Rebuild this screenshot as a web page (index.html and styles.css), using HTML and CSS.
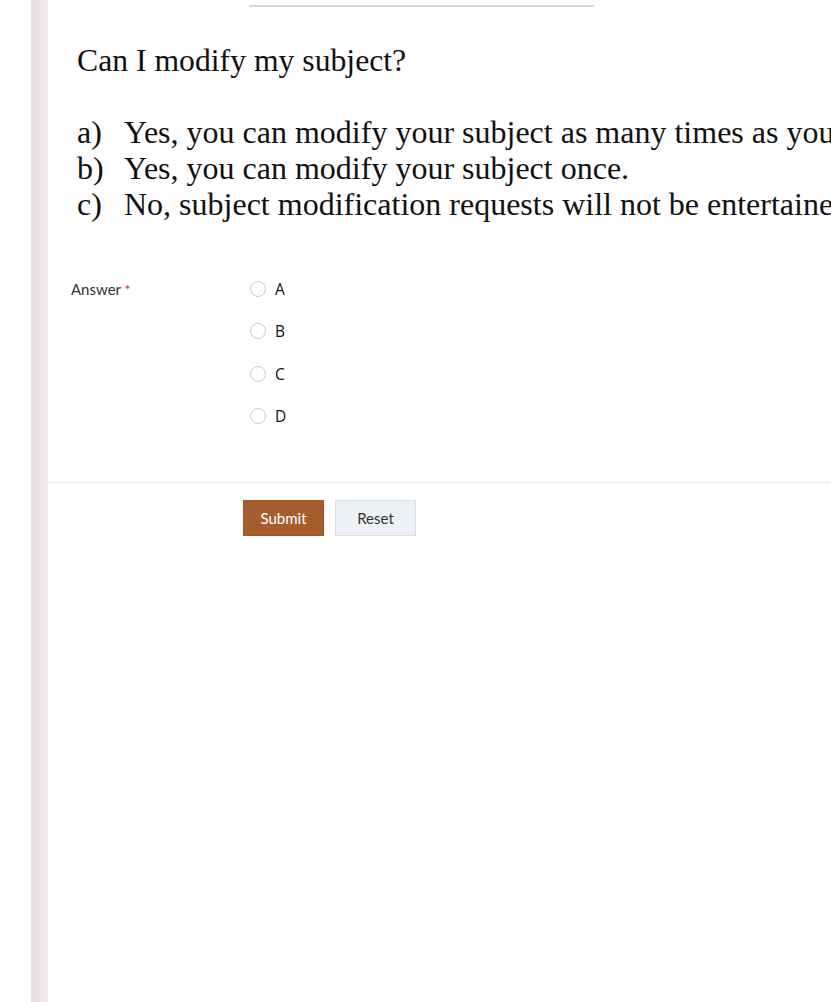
FILE: index.html
```html
<!DOCTYPE html>
<html>
<head>
<meta charset="utf-8">
<link rel="stylesheet" href="styles.css">
</head>
<body>
<div class="page">
  <div class="side"></div>
  <main class="main">
    <div class="topline"></div>
    <div class="question">
      <h1 class="qtitle">Can I modify my subject?</h1>
      <ol class="opts">
        <li><span class="mk">a)</span><span>Yes, you can modify your subject as many times as you want.</span></li>
        <li><span class="mk">b)</span><span>Yes, you can modify your subject once.</span></li>
        <li><span class="mk">c)</span><span>No, subject modification requests will not be entertained.</span></li>
      </ol>
    </div>
    <div class="field">
      <div class="label">Answer <span class="req">*</span></div>
      <div class="radios">
        <label class="radio"><span class="circle"></span><span class="rtxt">A</span></label>
        <label class="radio"><span class="circle"></span><span class="rtxt">B</span></label>
        <label class="radio"><span class="circle"></span><span class="rtxt">C</span></label>
        <label class="radio"><span class="circle"></span><span class="rtxt">D</span></label>
      </div>
    </div>
    <div class="actions">
      <button class="btn submit">Submit</button>
      <button class="btn reset">Reset</button>
    </div>
  </main>
</div>
</body>
</html>
```
FILE: styles.css
```css
html, body {
  margin: 0;
  padding: 0;
  background: #fff;
  overflow: hidden;
}
.page {
  display: flex;
  height: 1002px;
  width: 831px;
  overflow: hidden;
}
.side {
  margin-left: 31px;
  width: 17px;
  flex: none;
  background: linear-gradient(to right, #e3dfdf, #ece8e8 60%, #eeeaea);
}
.main {
  flex: 1;
  min-width: 0;
  white-space: nowrap;
  overflow: hidden;
}
.topline {
  margin-left: 201px;
  width: 345px;
  height: 2px;
  margin-top: 5px;
  background: #d6d6d6;
}
.question {
  padding-left: 29px;
  font-family: "Liberation Serif", "Times New Roman", serif;
  color: #111;
}
.qtitle {
  font-size: 31.7px;
  font-weight: normal;
  margin: 35px 0 0;
  line-height: 37px;
}
.opts {
  list-style: none;
  margin: 35px 0 0;
  padding: 0;
  font-size: 32px;
  line-height: 36px;
}
.opts li {
  display: flex;
}
.mk {
  width: 47px;
  flex: none;
}
.field {
  display: flex;
  margin-top: 58px;
  font-family: Lato, "Liberation Sans", sans-serif;
  font-size: 15px;
}
.label {
  width: 179px;
  padding-left: 23px;
  color: #333;
  line-height: 18px;
}
.req {
  color: #c0392b;
  font-size: 14px;
}
.radios {
  display: flex;
  flex-direction: column;
  gap: 24.4px;
}
.radio {
  display: flex;
  align-items: center;
  height: 18px;
}
.circle {
  width: 14px;
  height: 14px;
  border: 1px solid #c8c8c8;
  border-radius: 50%;
  margin-right: 9px;
  background: #fff;
}
.rtxt {
  font-family: "Open Sans", "Liberation Sans", sans-serif;
  font-size: 15.5px;
  color: #111;
}
.actions {
  margin-top: 57px;
  border-top: 1px solid #ebebeb;
  padding: 17px 0 0 195px;
  display: flex;
  gap: 11px;
}
.btn {
  width: 81px;
  height: 36px;
  font-family: Lato, "Liberation Sans", sans-serif;
  font-size: 15px;
  border-radius: 0;
  cursor: pointer;
}
.submit {
  background: #a65e2e;
  color: #fff;
  border: 1px solid #9a5428;
}
.reset {
  background: #edf0f5;
  color: #333;
  border: 1px solid #d9dde4;
}
```
